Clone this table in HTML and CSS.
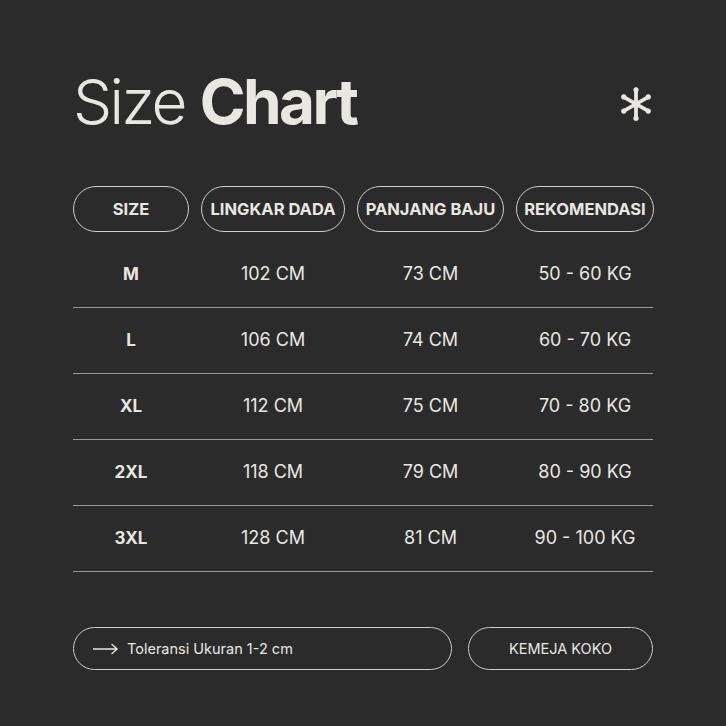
FILE: index.html
```html
<!DOCTYPE html>
<html lang="id">
<head>
<meta charset="utf-8">
<title>Size Chart</title>
<link rel="stylesheet" href="styles.css">
</head>
<body>
<main class="page">
  <header class="top">
    <h1 class="title"><span class="light">Size</span> <span class="bold">Chart</span></h1>
    <svg class="asterisk" width="36" height="36" viewBox="0 0 36 36" aria-hidden="true">
      <g stroke="#e9e7e2" stroke-width="3.8" stroke-linecap="round">
        <line x1="18" y1="3.5" x2="18" y2="32.5"/>
        <line x1="5.5" y1="10.8" x2="30.5" y2="25.2"/>
        <line x1="5.5" y1="25.2" x2="30.5" y2="10.8"/>
      </g>
      <g fill="#e9e7e2">
        <circle cx="18" cy="3.8" r="2.6"/>
        <circle cx="18" cy="32.2" r="2.6"/>
        <circle cx="5.8" cy="10.9" r="2.6"/>
        <circle cx="30.2" cy="25.1" r="2.6"/>
        <circle cx="5.8" cy="25.1" r="2.6"/>
        <circle cx="30.2" cy="10.9" r="2.6"/>
      </g>
    </svg>
  </header>

  <section class="chart">
    <div class="head">
      <div class="pill">SIZE</div>
      <div class="pill">LINGKAR DADA</div>
      <div class="pill">PANJANG BAJU</div>
      <div class="pill">REKOMENDASI</div>
    </div>
    <div class="rows">
      <div class="row"><span class="size">M</span><span>102 CM</span><span>73 CM</span><span>50 - 60 KG</span></div>
      <div class="row"><span class="size">L</span><span>106 CM</span><span>74 CM</span><span>60 - 70 KG</span></div>
      <div class="row"><span class="size">XL</span><span>112 CM</span><span>75 CM</span><span>70 - 80 KG</span></div>
      <div class="row"><span class="size">2XL</span><span>118 CM</span><span>79 CM</span><span>80 - 90 KG</span></div>
      <div class="row"><span class="size">3XL</span><span>128 CM</span><span>81 CM</span><span>90 - 100 KG</span></div>
    </div>
  </section>

  <footer class="foot">
    <div class="note">
      <svg class="arrow" width="26" height="12" viewBox="0 0 26 12" aria-hidden="true">
        <path d="M0 6H24M19 1.5L24.2 6L19 10.5" fill="none" stroke="#e9e7e2" stroke-width="1.4" stroke-linecap="round" stroke-linejoin="round"/>
      </svg>
      <span>Toleransi Ukuran 1-2 cm</span>
    </div>
    <div class="brand">KEMEJA KOKO</div>
  </footer>
</main>
</body>
</html>
```

FILE: styles.css
```css
* { box-sizing: border-box; }
html, body {
  margin: 0;
  padding: 0;
  background: #2b2b2b;
}
body {
  font-family: Inter, "Noto Sans", sans-serif;
  color: #e9e7e2;
}
.page {
  width: 726px;
  height: 726px;
  padding: 71px 73px 0 73px;
}
.top {
  display: flex;
  justify-content: space-between;
  align-items: flex-start;
  height: 62px;
}
.title {
  margin: 0;
  font-size: 62px;
  line-height: 62px;
  font-weight: 400;
  letter-spacing: -2.6px;
}
.title .light { font-weight: 300; }
.title .bold { font-weight: 700; }
.asterisk {
  margin-top: 15px;
  margin-right: -1px;
}
.chart {
  margin-top: 53px;
}
.head {
  display: grid;
  grid-template-columns: 116px 144px 147px 138px;
  column-gap: 12px;
}
.pill {
  height: 46px;
  border: 1.5px solid #cfcdc8;
  border-radius: 23px;
  display: flex;
  align-items: center;
  justify-content: center;
  font-size: 16.5px;
  font-weight: 700;
  letter-spacing: 0;
  white-space: nowrap;
}
.rows {
  margin-top: 10px;
}
.row {
  display: grid;
  grid-template-columns: 116px 144px 147px 138px;
  column-gap: 12px;
  height: 66px;
  align-items: center;
  border-bottom: 1px solid #9a9996;
  font-size: 18px;
  font-weight: 400;
}
.row span {
  text-align: center;
  padding-bottom: 2px;
}
.row .size {
  font-weight: 700;
  font-size: 17px;
}
.foot {
  margin-top: 55px;
  display: flex;
  gap: 16px;
}
.note, .brand {
  height: 43px;
  border: 1.5px solid #cfcdc8;
  border-radius: 22px;
  display: flex;
  align-items: center;
  font-size: 14.5px;
}
.note {
  width: 379px;
  padding-left: 19px;
  gap: 8px;
}
.brand {
  flex: 1;
  justify-content: center;
}
```
